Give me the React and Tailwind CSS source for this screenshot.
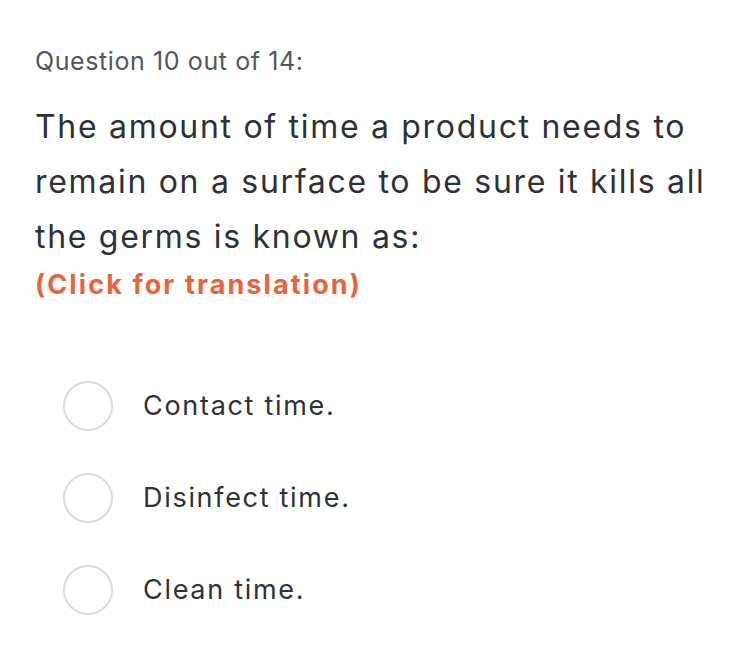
export default function App() {
  const options = ["Contact time.", "Disinfect time.", "Clean time."];
  return (
    <div className="w-[753px] h-[664px] bg-white overflow-hidden" style={{ fontFamily: "Inter, 'Noto Sans', sans-serif" }}>
      <div className="pl-[35px] pt-[45px]">
        <div className="text-[25px] leading-[32px] text-[#545659] tracking-[0.6px]">Question 10 out of 14:</div>
        <div className="mt-[22px] text-[32px] leading-[55px] text-[#2e3236] tracking-[1.7px] whitespace-nowrap">
          The amount of time a product needs to
          <br />
          remain on a surface to be sure it kills all
          <br />
          the germs is known as:
        </div>
        <div className="mt-[4px] text-[27px] leading-[34px] font-bold text-[#e8643a] tracking-[2.1px]">(Click for translation)</div>
        <div className="mt-[79px] flex flex-col gap-[42px] pl-[28px]">
          {options.map((o) => (
            <div key={o} className="flex items-center gap-[30px] h-[50px]">
              <div className="w-[50px] h-[50px] rounded-full border-2 border-[#dcdcdc] shrink-0" />
              <div className="text-[27px] text-[#2e3236] tracking-[1.7px]">{o}</div>
            </div>
          ))}
        </div>
      </div>
    </div>
  );
}
